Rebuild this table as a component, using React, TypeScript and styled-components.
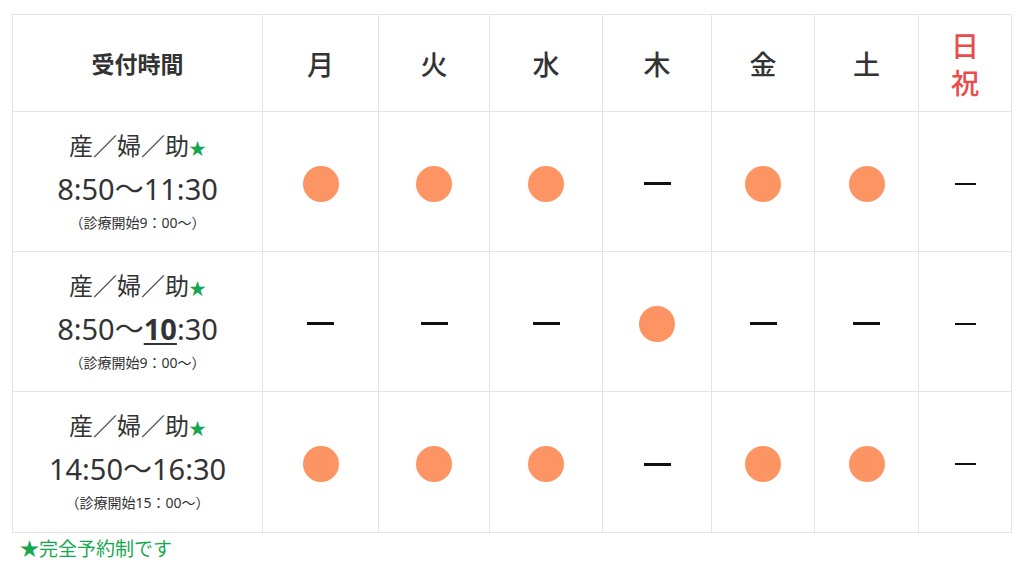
import styled, { createGlobalStyle } from "styled-components";

const GlobalStyle = createGlobalStyle`
  html, body {
    margin: 0;
    padding: 0;
    background: #ffffff;
  }
  body {
    font-family: "Noto Sans", "Noto Sans CJK JP", sans-serif;
    color: #333333;
  }
`;

const Wrapper = styled.div`
  padding: 14px 13px 0 12px;
`;

const Grid = styled.div`
  display: grid;
  grid-template-columns: 250px 116px 111px 113px 109px 103px 104px 93px;
  grid-template-rows: 97px 140px 140px 141px;
  width: 999px;
  border-top: 1px solid #e4e4e4;
  border-left: 1px solid #e4e4e4;
  box-sizing: border-box;
`;

const Cell = styled.div`
  box-sizing: border-box;
  border-right: 1px solid #e4e4e4;
  border-bottom: 1px solid #e4e4e4;
  display: flex;
  align-items: center;
  justify-content: center;
  text-align: center;
`;

const HeadLabel = styled(Cell)`
  font-family: "Noto Sans CJK JP", sans-serif;
  font-size: 23px;
  font-weight: 700;
  color: #333;
`;

const DayHead = styled(Cell)<{ $holiday?: boolean }>`
  flex-direction: column;
  padding-top: ${(p) => (p.$holiday ? "2px" : "0")};
  font-family: "Noto Sans CJK JP", sans-serif;
  font-size: ${(p) => (p.$holiday ? "28px" : "27px")};
  font-weight: 500;
  line-height: ${(p) => (p.$holiday ? "37px" : "1")};
  color: ${(p) => (p.$holiday ? "#ec4b4b" : "#333333")};
`;

const TimeCell = styled(Cell)`
  flex-direction: column;
  padding-bottom: 2px;
`;

const Dept = styled.div`
  font-family: "Noto Sans CJK JP", sans-serif;
  font-size: 24px;
  line-height: 30px;
  color: #333;
`;

const Star = styled.span`
  color: #13a84e;
  font-size: 17px;
`;

const Hours = styled.div`
  font-size: 29px;
  line-height: 36px;
  margin-top: 8px;
  color: #333;
`;

const Emph = styled.span`
  font-weight: 700;
  text-decoration: underline;
  text-underline-offset: 3px;
  text-decoration-thickness: 2px;
`;

const Note = styled.div`
  font-size: 14px;
  line-height: 18px;
  margin-top: 7px;
  color: #333;
`;

const Dot = styled.span`
  display: block;
  width: 36px;
  height: 36px;
  border-radius: 50%;
  background: #fc9563;
  margin-top: 4px;
`;

const Dash = styled.span<{ $short?: boolean }>`
  display: block;
  width: ${(p) => (p.$short ? "21px" : "27px")};
  height: ${(p) => (p.$short ? "2px" : "3px")};
  background: #111;
  margin-top: 4px;
`;

const Footnote = styled.div`
  margin: 2px 0 0 8px;
  font-family: "Noto Sans CJK JP", sans-serif;
  font-size: 19px;
  line-height: 26px;
  color: #13a84e;
`;

const days = ["月", "火", "水", "木", "金", "土"];

type Slot = {
  hours: React.ReactNode;
  note: string;
  open: boolean[];
};

const slots: Slot[] = [
  {
    hours: "8:50～11:30",
    note: "（診療開始9：00～）",
    open: [true, true, true, false, true, true],
  },
  {
    hours: (
      <>
        8:50～<Emph>10</Emph>:30
      </>
    ),
    note: "（診療開始9：00～）",
    open: [false, false, false, true, false, false],
  },
  {
    hours: "14:50～16:30",
    note: "（診療開始15：00～）",
    open: [true, true, true, false, true, true],
  },
];

export default function App() {
  return (
    <Wrapper>
      <GlobalStyle />
      <Grid>
        <HeadLabel>受付時間</HeadLabel>
        {days.map((d) => (
          <DayHead key={d}>{d}</DayHead>
        ))}
        <DayHead $holiday>
          <span>日</span>
          <span>祝</span>
        </DayHead>

        {slots.map((s, i) => (
          <>
            <TimeCell key={`t${i}`}>
              <Dept>
                産／婦／助<Star>★</Star>
              </Dept>
              <Hours>{s.hours}</Hours>
              <Note>{s.note}</Note>
            </TimeCell>
            {s.open.map((o, j) => (
              <Cell key={`c${i}-${j}`}>{o ? <Dot /> : <Dash />}</Cell>
            ))}
            <Cell key={`h${i}`}>
              <Dash $short />
            </Cell>
          </>
        ))}
      </Grid>
      <Footnote>★完全予約制です</Footnote>
    </Wrapper>
  );
}
